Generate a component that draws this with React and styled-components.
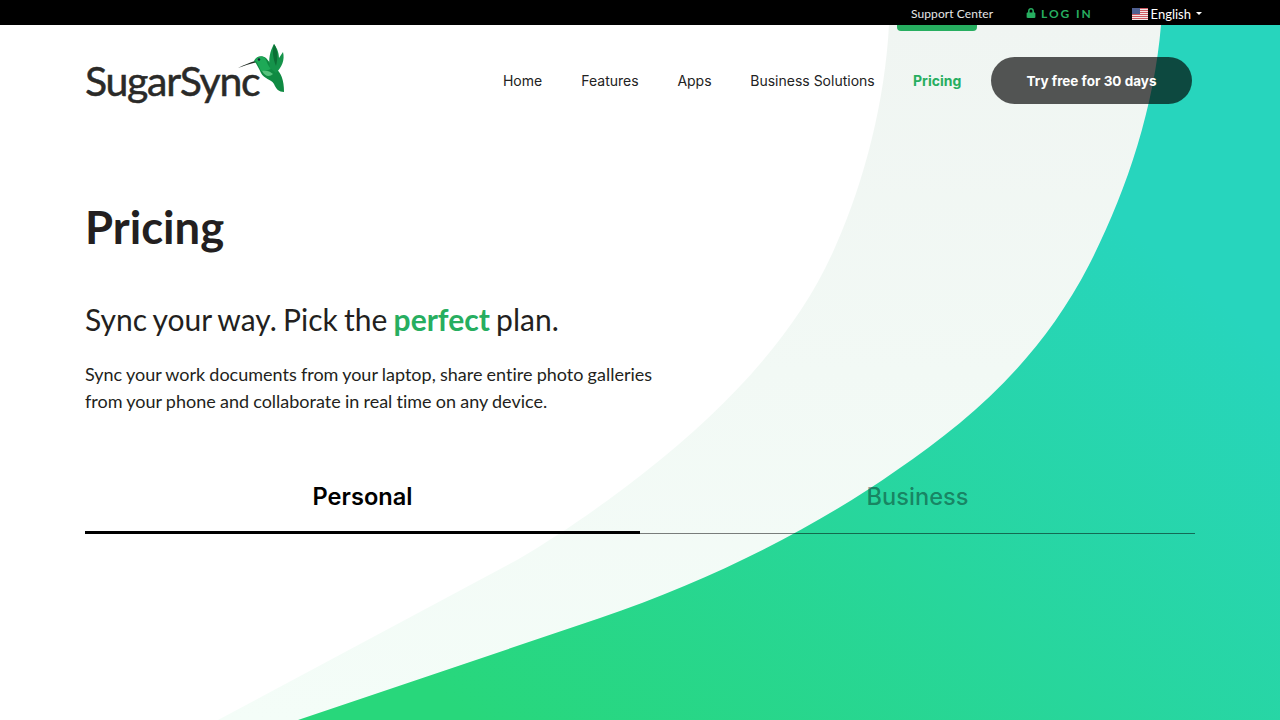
import React from 'react'
import styled, { createGlobalStyle } from 'styled-components'
import { FaLock } from 'react-icons/fa'

const GlobalStyle = createGlobalStyle`
  html, body {
    margin: 0;
    padding: 0;
    background: #fff;
    font-family: "Lato", "Liberation Sans", sans-serif;
    overflow: hidden;
  }
`

const NAV_FONT = `"Inter", "Lato", "Liberation Sans", sans-serif`

const navLinks = [
  { label: 'Home', width: 41 },
  { label: 'Features', width: 58 },
  { label: 'Apps', width: 35 },
  { label: 'Business Solutions', width: 125 },
]

function Backdrop() {
  return (
    <BackdropSvg viewBox="0 0 1280 720" preserveAspectRatio="none" aria-hidden="true">
      <defs>
        <linearGradient id="wave" gradientUnits="userSpaceOnUse" x1="520" y1="760" x2="1020" y2="140">
          <stop offset="0" stopColor="#28d77b" />
          <stop offset="1" stopColor="#27d5bd" />
        </linearGradient>
        <linearGradient id="veil" x1="0" y1="0" x2="0" y2="1">
          <stop offset="0" stopColor="#f0f5f2" />
          <stop offset="1" stopColor="#f4fdf8" />
        </linearGradient>
      </defs>
      <path
        d="M889 25 C885 100 865 180 836 245 C800 330 730 405 645 472 C610 500 560 535 517 560 L218 720 L1280 720 L1280 25 Z"
        fill="url(#veil)"
      />
      <path
        d="M1161 25 C1154 110 1125 195 1089 265 C1040 360 970 420 897 470 C816 527 712 580 600 618 L298 720 L1280 720 L1280 25 Z"
        fill="url(#wave)"
      />
    </BackdropSvg>
  )
}

function HummingBird() {
  return (
    <BirdSvg width="48" height="50" viewBox="0 0 48 50" aria-hidden="true">
      <path d="M1 24 C7 21 13 18.5 18 17 L18.5 18.5 C12 20 7 22 1 24 Z" fill="#1f2a22" />
      <path
        d="M17 17 C19 12 25 11 29 14 C32 17 34 21 38 24 C44 28 47 36 47 48 C42 48 39 45 37 40 C34 35 27 35 24 29 C22 25 20 20 17 17 Z"
        fill="#0f8a42"
      />
      <path d="M18 16 C20 12 25 12 28 14 C30 18 31 22 34 25 C29 27 26 27 24 27 C22 23 21 19 18 16 Z" fill="#1ea957" />
      <path d="M25 27 C29 26 33 27 36 30 C33 33 28 33 25 27 Z" fill="#57c27c" />
      <path d="M33 24 C31 16 33 7 37 0 C41 5 42 11 42 14 L46 8 C48 16 45 23 39 29 C37 27 35 26 33 24 Z" fill="#15934a" />
      <path d="M37 0 C41 6 41 14 39 22 C36 15 35 7 37 0 Z" fill="#0c6f35" />
      <circle cx="22" cy="15.5" r="1.2" fill="#123" />
    </BirdSvg>
  )
}

function UsFlag() {
  return (
    <svg width="16" height="12" viewBox="0 0 16 12" aria-hidden="true">
      <rect width="16" height="12" fill="#f4e6e6" />
      {[0, 2, 4, 6, 8, 10].map((y) => (
        <rect key={y} y={y} width="16" height="1" fill="#cf5a62" />
      ))}
      <rect width="8" height="6" fill="#4f5f90" />
    </svg>
  )
}

export default function App() {
  return (
    <Page>
      <GlobalStyle />
      <Backdrop />
      <TopBar>
        <SupportLink>Support Center</SupportLink>
        <LoginLink>
          <FaLock size={10} />
          LOG IN
        </LoginLink>
        <LangPicker>
          <UsFlag />
          English
          <Caret />
        </LangPicker>
      </TopBar>

      <Header>
        <Logo>
          <LogoText>SugarSync</LogoText>
          <HummingBird />
        </Logo>
        <Nav>
          {navLinks.map((link) => (
            <NavLink key={link.label} $width={link.width}>
              {link.label}
            </NavLink>
          ))}
          <NavLink $active $width={48}>
            <ActiveMark />
            Pricing
          </NavLink>
          <TryButton>Try free for 30 days</TryButton>
        </Nav>
      </Header>

      <Main>
        <Title>Pricing</Title>
        <Lead>
          Sync your way. Pick the <strong>perfect</strong> plan.
        </Lead>
        <Intro>
          Sync your work documents from your laptop, share entire photo galleries
          <br />
          from your phone and collaborate in real time on any device.
        </Intro>
        <Tabs>
          <Tab $active>Personal</Tab>
          <Tab>Business</Tab>
        </Tabs>
      </Main>
    </Page>
  )
}

const Page = styled.div`
  position: relative;
  width: 1280px;
  height: 720px;
  overflow: hidden;
`
const BackdropSvg = styled.svg`
  position: absolute;
  inset: 0;
  width: 1280px;
  height: 720px;
`
const BirdSvg = styled.svg`
  flex: none;
`
const TopBar = styled.div`
  position: relative;
  height: 25px;
  box-sizing: border-box;
  padding: 2px 78px 0 0;
  background: #000;
  display: flex;
  justify-content: flex-end;
  align-items: center;
`
const SupportLink = styled.a`
  font-size: 12px;
  color: #e6e6e6;
  letter-spacing: 0.08px;
  margin-right: 33px;
`
const LoginLink = styled.a`
  display: flex;
  align-items: center;
  gap: 5px;
  font-size: 12px;
  font-weight: 700;
  letter-spacing: 1.9px;
  color: #27ae60;
  margin-right: 39px;

  svg {
    margin-top: -2px;
  }
`
const LangPicker = styled.div`
  display: flex;
  align-items: center;
  gap: 3px;
  font-size: 13px;
  color: #fff;
`
const Caret = styled.span`
  width: 0;
  height: 0;
  margin-left: 2px;
  border-top: 3px solid #fff;
  border-left: 3px solid transparent;
  border-right: 3px solid transparent;
`
const Header = styled.header`
  position: relative;
  display: flex;
  justify-content: space-between;
  align-items: center;
  height: 110px;
  padding: 0 88px 0 85px;
`
const Logo = styled.div`
  align-self: flex-start;
  display: flex;
  align-items: flex-start;
  margin-top: 19px;
`
const LogoText = styled.span`
  font-family: "Lato", sans-serif;
  font-size: 41px;
  line-height: 1;
  letter-spacing: -1.3px;
  color: #2a2a28;
  -webkit-text-stroke: 0.5px #2a2a28;
  margin-top: 16px;
  margin-right: -22px;
`
const Nav = styled.nav`
  display: flex;
  align-items: center;
  gap: 38px;
  margin-top: 1px;
`
const NavLink = styled.a`
  position: relative;
  width: ${(p) => p.$width}px;
  white-space: nowrap;
  text-align: center;
  font-family: ${NAV_FONT};
  font-size: 14px;
  font-weight: ${(p) => (p.$active ? 700 : 400)};
  color: ${(p) => (p.$active ? '#27ae60' : '#222')};
`
const ActiveMark = styled.span`
  position: absolute;
  top: -47px;
  left: -16px;
  width: 80px;
  height: 6px;
  background: #27ae60;
  border-radius: 0 0 4px 4px;
`
const TryButton = styled.a`
  display: flex;
  align-items: center;
  justify-content: center;
  width: 201px;
  height: 47px;
  margin-left: -8px;
  border-radius: 24px;
  background: rgba(0, 0, 0, 0.66);
  color: #fff;
  font-family: ${NAV_FONT};
  font-size: 13.5px;
  font-weight: 700;
`
const Main = styled.main`
  position: relative;
  padding: 0 85px;
`
const Title = styled.h1`
  margin: 63px 0 0;
  font-size: 45.4px;
  line-height: 58px;
  font-weight: 700;
  color: #231f20;
`
const Lead = styled.h2`
  margin: 43px 0 0;
  font-size: 30px;
  line-height: 40px;
  font-weight: 400;
  word-spacing: -1.4px;
  font-variant-ligatures: none;
  color: #231f20;

  strong {
    color: #27ae60;
    font-weight: 700;
  }
`
const Intro = styled.p`
  margin: 22px 0 0;
  font-size: 18px;
  line-height: 27px;
  word-spacing: -0.42px;
  font-variant-ligatures: none;
  color: #231f20;
`
const Tabs = styled.div`
  display: grid;
  grid-template-columns: 1fr 1fr;
  align-items: end;
  width: 1110px;
  margin-top: 55px;
`
const Tab = styled.div`
  height: 64px;
  box-sizing: border-box;
  padding-top: 12px;
  text-align: center;
  font-family: ${NAV_FONT};
  font-size: 23.6px;
  font-weight: ${(p) => (p.$active ? 600 : 500)};
  color: ${(p) => (p.$active ? '#000' : 'rgba(0, 0, 0, 0.4)')};
  border-bottom: ${(p) => (p.$active ? '3px solid #000' : '1px solid rgba(0, 0, 0, 0.5)')};
`
